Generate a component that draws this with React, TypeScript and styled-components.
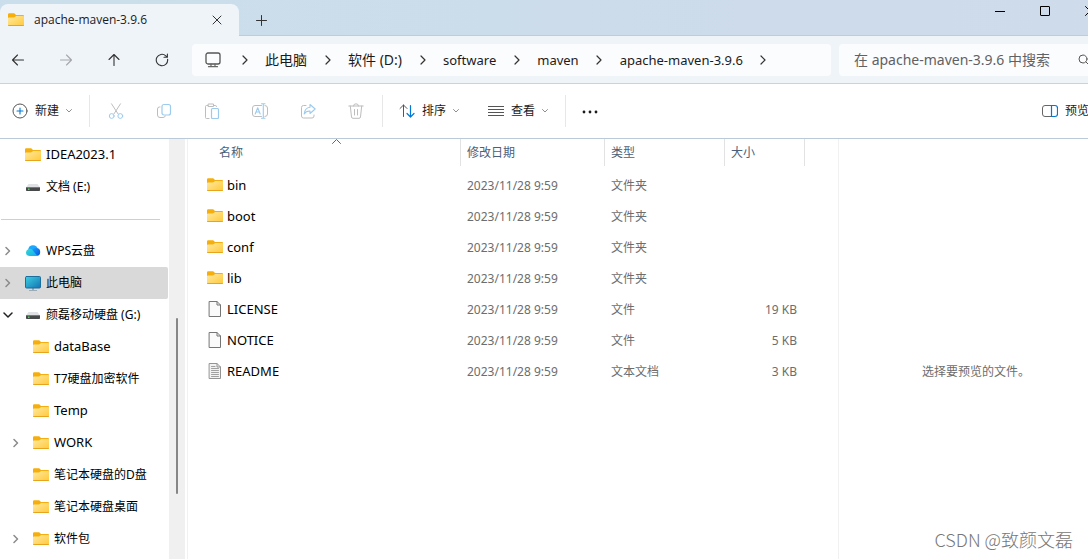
import React from "react";
import styled, { createGlobalStyle, css } from "styled-components";

const GlobalStyle = createGlobalStyle`
  * { box-sizing: border-box; }
  html, body { margin: 0; overflow: hidden; }
  body {
    font-family: "Noto Sans", "Noto Sans CJK SC", sans-serif;
    font-size: 12px;
    line-height: 16px;
    color: #000;
    background: #fff;
  }
  button, input { font: inherit; color: inherit; }
`;

/* The window reaches a little past the right edge of the screen. */
const Window = styled.main`
  display: flex;
  flex-direction: column;
  width: calc(100% + 25px);
  height: 100vh;
  overflow: hidden;
`;

const plainButton = css`
  display: flex;
  align-items: center;
  justify-content: center;
  margin: 0;
  padding: 0;
  border: 0;
  background: none;
`;

const TitleBar = styled.header`
  display: flex;
  align-items: flex-start;
  height: 36px;
  flex: none;
  background: linear-gradient(90deg, #cadfeb, #ccdcea 50%, #cfdbea);
  border-bottom: 1px solid #bccede;
`;

const Tab = styled.div`
  display: flex;
  align-items: center;
  width: 239px;
  height: 32px;
  margin-top: 4px;
  padding: 0 14px 0 8px;
  gap: 10px;
  border-radius: 8px 8px 0 0;
  background: #eff4f9;
`;

const TabTitle = styled.span`
  flex: 1;
  font-family: "Open Sans", "Noto Sans", sans-serif;
  font-weight: 500;
  color: #1b1b1b;
`;

const TabButton = styled.button`
  ${plainButton}
  width: 16px;
  height: 16px;
`;

const NewTabButton = styled.button`
  ${plainButton}
  width: 28px;
  height: 32px;
  margin: 4px 0 0 8px;
`;

const WindowControls = styled.div`
  display: flex;
  margin-left: auto;
`;

const ControlButton = styled.button`
  ${plainButton}
  width: 45px;
  height: 22px;
`;

const NavBar = styled.div`
  display: flex;
  align-items: center;
  flex: none;
  height: 48px;
  padding: 0 13px 0 2px;
  background: #eff4f9;
  border-bottom: 1px solid #c9d3de;
`;

const NavButtons = styled.div`
  display: flex;
  gap: 16px;
  margin-right: 14px;
`;

const NavButton = styled.button`
  ${plainButton}
  width: 32px;
  height: 32px;
`;

const AddressBar = styled.nav`
  display: flex;
  align-items: center;
  flex: 1;
  height: 32px;
  padding-left: 13px;
  border-radius: 4px;
  background: #fbfcfe;
  white-space: nowrap;
`;

const DeviceIcon = styled.span`
  display: flex;
  margin-right: 3px;
`;

const Crumb = styled.button<{ $latin?: boolean }>`
  ${plainButton}
  font-size: ${(p) => (p.$latin ? 13 : 14)}px;
  line-height: 20px;
  color: #1b1b1b;
`;

const CrumbArrow = styled.span`
  display: flex;
  justify-content: center;
  width: 41px;
`;

const SearchBox = styled.label`
  display: flex;
  align-items: center;
  width: 261px;
  height: 32px;
  margin-left: 8px;
  padding: 0 10px 0 15px;
  border-radius: 4px;
  background: #fbfcfe;
`;

const SearchInput = styled.input`
  flex: 1;
  min-width: 0;
  padding: 0;
  border: 0;
  outline: 0;
  background: none;
  font-size: 14px;
  line-height: 20px;
  &::placeholder { color: #5f6164; opacity: 1; }
`;

const Toolbar = styled.div`
  display: flex;
  align-items: center;
  flex: none;
  height: 55px;
  padding: 0 12px;
  background: #fff;
  border-bottom: 1px solid #b9cbdb;
`;

const ToolButton = styled.button<{ $wide?: boolean }>`
  ${plainButton}
  gap: 7px;
  height: 32px;
  width: ${(p) => (p.$wide ? "auto" : "48px")};
  color: #1b1b1b;
  white-space: nowrap;
`;

const ButtonGroup = styled.div<{ $gap?: number }>`
  display: flex;
  gap: ${(p) => p.$gap ?? 0}px;
`;

const ToolDivider = styled.span<{ $before?: number; $after?: number }>`
  width: 1px;
  height: 32px;
  margin: 0 ${(p) => p.$after ?? 0}px 0 ${(p) => p.$before ?? 0}px;
  background: #e7e7e7;
`;

const DetailsToggle = styled.div`
  margin-left: auto;
  margin-right: 12px;
`;

const Body = styled.div`
  display: flex;
  flex: 1;
  min-height: 0;
`;

const Sidebar = styled.aside`
  display: flex;
  flex: none;
  width: 188px;
  border-right: 1px solid #f1f1f1;
`;

const Tree = styled.ul`
  flex: 1;
  margin: 0;
  padding: 0;
  list-style: none;
`;

const TreeRow = styled.li<{ $selected?: boolean }>`
  height: 32px;
  margin-right: 1px;
  border-radius: 0 2px 2px 0;
  background: ${(p) => (p.$selected ? "#d9d9d9" : "transparent")};
`;

const TreeItem = styled.button<{ $child?: boolean }>`
  ${plainButton}
  justify-content: flex-start;
  width: 100%;
  height: 32px;
  padding-left: ${(p) => (p.$child ? 8 : 0)}px;
  white-space: nowrap;
`;

const TreeArrow = styled.span`
  display: flex;
  justify-content: center;
  width: 15px;
  margin-right: 10px;
`;

const TreeLabel = styled.span<{ $latin?: boolean }>`
  margin-left: 5px;
  padding-bottom: ${(p) => (p.$latin ? 2 : 0)}px;
  font-size: ${(p) => (p.$latin ? 13 : 12)}px;
`;

const TreeSeparator = styled.li`
  display: flex;
  align-items: center;
  height: 32px;
  padding: 0 9px 0 1px;
  &::before {
    content: "";
    flex: 1;
    height: 1px;
    background: #cfcfcf;
  }
`;

const ScrollTrack = styled.div`
  width: 16px;
  margin-right: 2px;
  padding: 179px 7px 0;
  background: #f0f0f0;
`;

const ScrollThumb = styled.div`
  height: 176px;
  border-radius: 1px;
  background: #868686;
`;

const ListPane = styled.section`
  flex: 1;
  min-width: 0;
`;

const FileTable = styled.table`
  width: 617px;
  table-layout: fixed;
  border-collapse: separate;
  border-spacing: 0;
  white-space: nowrap;
`;

const HeadCell = styled.th<{ $width: number; $first?: boolean }>`
  position: relative;
  width: ${(p) => p.$width}px;
  height: 27px;
  padding: 0 0 0 ${(p) => (p.$first ? 31 : 6)}px;
  border-right: 1px solid #e2e2e2;
  text-align: left;
  font-weight: 400;
  color: #4c607a;
`;

const SortMark = styled.span`
  position: absolute;
  top: 0;
  left: 144px;
  display: flex;
`;

const Spacer = styled.tr`
  height: 4px;
`;

const Cell = styled.td<{ $right?: boolean }>`
  height: 31px;
  padding: 0 ${(p) => (p.$right ? 8 : 0)}px 0 6px;
  text-align: ${(p) => (p.$right ? "right" : "left")};
  color: #6d6d6d;
`;

const NameCell = styled.td`
  height: 31px;
  padding: 0 0 2px 19px;
`;

const FileName = styled.span`
  display: flex;
  align-items: center;
  gap: 4px;
  font-size: 13px;
`;

const PreviewPane = styled.aside`
  display: flex;
  flex-direction: column;
  justify-content: space-between;
  align-items: center;
  flex: none;
  width: 275px;
  padding: 225px 0 8px;
  border-left: 1px solid #f1f1f1;
  color: #6d6d6d;
`;

const PreviewHint = styled.p`
  margin: 0;
`;

const Watermark = styled.p`
  margin: 0 40px 0 0;
  align-self: flex-end;
  font-family: "Noto Sans CJK SC", sans-serif;
  font-weight: 300;
  font-size: 18px;
  line-height: 24px;
  color: #777;
`;

const Icon = styled.svg`
  flex: none;
  fill: none;
  stroke-linecap: round;
  stroke-linejoin: round;
`;

const Svg = ({ w = 16, h = 16, children }: { w?: number; h?: number; children: React.ReactNode }) => (
  <Icon width={w} height={h} viewBox={`0 0 ${w} ${h}`} aria-hidden="true">
    {children}
  </Icon>
);

const GRAY = "#bdbdbd";
const PALE = "#9ccbee";
const BLUE = "#0078d4";
const DARK = "#333";

const FolderIcon = () => (
  <Svg>
    <defs>
      <linearGradient id="folderFront" x1="0" y1="0" x2="1" y2="1">
        <stop offset="0" stopColor="#ffe9a0" />
        <stop offset="1" stopColor="#ffc93a" />
      </linearGradient>
    </defs>
    <path d="M0 2.5Q0 1.3 1.2 1.3H6.2L8 3H15Q16 3 16 4V7H0Z" fill="#f5ae0c" />
    <path d="M0 6.2Q0 5.5 .8 5.5H6L8.2 4H15.2Q16 4 16 4.8V13Q16 14 15 14H1Q0 14 0 13Z" fill="url(#folderFront)" />
    <path d="M.6 13.5H15.4" stroke="#e8a41c" />
  </Svg>
);

const DriveIcon = () => (
  <Svg>
    <path d="M3.5 5H12.5L15 8.5H1Z" fill="#dfe1e4" />
    <rect x="1" y="8" width="14" height="4" rx=".8" fill="#46484a" />
    <rect x="1" y="8" width="14" height="1" fill="#77797b" />
    <rect x="3" y="9.5" width="1.5" height="1.5" fill="#3fe04f" />
  </Svg>
);

const CloudIcon = () => (
  <Svg>
    <defs>
      <linearGradient id="cloudLeft" x1="0" y1="0" x2="1" y2="1">
        <stop offset="0" stopColor="#36d8d0" />
        <stop offset="1" stopColor="#12a8f5" />
      </linearGradient>
      <linearGradient id="cloudRight" x1="0" y1="0" x2="1" y2="1">
        <stop offset="0" stopColor="#1aa0ff" />
        <stop offset="1" stopColor="#0a52dc" />
      </linearGradient>
    </defs>
    <circle cx="8" cy="7" r="4.8" fill="#1ba7fb" />
    <circle cx="11.2" cy="9" r="4" fill="url(#cloudRight)" />
    <path d="M1 9.2A3.7 3.7 0 0 1 7.6 7.2L12.6 13H4.7A3.8 3.8 0 0 1 1 9.2Z" fill="url(#cloudLeft)" />
  </Svg>
);

const MonitorIcon = () => (
  <Svg>
    <defs>
      <linearGradient id="screen" x1="0" y1="0" x2="1" y2="1">
        <stop offset="0" stopColor="#3fd0e0" />
        <stop offset="1" stopColor="#1173b5" />
      </linearGradient>
    </defs>
    <path d="M7 13H9V15H7ZM4 15H12V16H4Z" fill="#9eabb5" />
    <rect x=".5" y="1.5" width="15" height="11.5" rx="1" fill="url(#screen)" stroke="#1a6d9c" />
  </Svg>
);

const FileIcon = ({ lines }: { lines?: boolean }) => (
  <Svg>
    <path d="M2.5 .5H10L13.5 4V15.5H2.5Z" fill={lines ? "#f2f2f2" : "#fafafa"} stroke={lines ? "#949494" : "#757575"} strokeLinejoin="miter" />
    <path d="M10 .5V4H13.5" stroke={lines ? "#949494" : "#757575"} />
    {lines && <path d="M4.5 3.5H8M4.5 5.5H11.5M4.5 7.5H11.5M4.5 9.5H11.5M4.5 11.5H11.5M4.5 13.5H11.5" stroke="#a0a0a0" />}
  </Svg>
);

const RightArrow = () => (
  <Svg w={6} h={10}><path d="M1 1L5 5L1 9" stroke={DARK} strokeWidth="1.2" /></Svg>
);
const TreeChevron = () => (
  <Svg w={6} h={10}><path d="M1 1.5L4.5 5L1 8.5" stroke="#8b8b8b" strokeWidth="1.5" /></Svg>
);
const TreeChevronOpen = () => (
  <Svg w={10} h={6}><path d="M1 1L5 5L9 1" stroke="#222" strokeWidth="1.5" /></Svg>
);
const Caret = () => (
  <Svg w={6} h={4}><path d="M.5 .5L3 3L5.5 .5" stroke="#8f8f8f" /></Svg>
);

const treeTop = [
  { label: "IDEA2023.1", icon: <FolderIcon />, latin: true },
  { label: "文档 (E:)", icon: <DriveIcon /> },
];

const treeBottom: { label: string; icon: React.ReactNode; arrow?: "closed" | "open"; selected?: boolean; child?: boolean; latin?: boolean }[] = [
  { label: "WPS云盘", icon: <CloudIcon />, arrow: "closed" },
  { label: "此电脑", icon: <MonitorIcon />, arrow: "closed", selected: true },
  { label: "颜磊移动硬盘 (G:)", icon: <DriveIcon />, arrow: "open" },
  { label: "dataBase", icon: <FolderIcon />, child: true, latin: true },
  { label: "T7硬盘加密软件", icon: <FolderIcon />, child: true },
  { label: "Temp", icon: <FolderIcon />, child: true, latin: true },
  { label: "WORK", icon: <FolderIcon />, child: true, arrow: "closed", latin: true },
  { label: "笔记本硬盘的D盘", icon: <FolderIcon />, child: true },
  { label: "笔记本硬盘桌面", icon: <FolderIcon />, child: true },
  { label: "软件包", icon: <FolderIcon />, child: true, arrow: "closed" },
];

const files = [
  { name: "bin", type: "文件夹", size: "", icon: <FolderIcon /> },
  { name: "boot", type: "文件夹", size: "", icon: <FolderIcon /> },
  { name: "conf", type: "文件夹", size: "", icon: <FolderIcon /> },
  { name: "lib", type: "文件夹", size: "", icon: <FolderIcon /> },
  { name: "LICENSE", type: "文件", size: "19 KB", icon: <FileIcon /> },
  { name: "NOTICE", type: "文件", size: "5 KB", icon: <FileIcon /> },
  { name: "README", type: "文本文档", size: "3 KB", icon: <FileIcon lines /> },
];

const crumbs = [
  { label: "此电脑" },
  { label: "软件 (D:)" },
  { label: "software", latin: true },
  { label: "maven", latin: true },
  { label: "apache-maven-3.9.6", latin: true },
];

export default function App() {
  return (
    <>
      <GlobalStyle />
      <Window>
        <TitleBar>
          <Tab>
            <FolderIcon />
            <TabTitle>apache-maven-3.9.6</TabTitle>
            <TabButton aria-label="关闭标签页">
              <Svg w={10} h={10}><path d="M1 1L9 9M9 1L1 9" stroke={DARK} /></Svg>
            </TabButton>
          </Tab>
          <NewTabButton aria-label="新建标签页">
            <Svg w={11} h={11}><path d="M5.5 .5V10.5M.5 5.5H10.5" stroke={DARK} /></Svg>
          </NewTabButton>
          <WindowControls>
            <ControlButton aria-label="最小化"><Svg w={11} h={11}><path d="M0 5.5H10" stroke="#000" strokeLinecap="butt" /></Svg></ControlButton>
            <ControlButton aria-label="最大化"><Svg w={11} h={10}><rect x=".5" y=".5" width="9" height="9" rx=".5" stroke="#000" /></Svg></ControlButton>
            <ControlButton aria-label="关闭"><Svg w={11} h={10}><path d="M.5 .5L9.5 9.5M9.5 .5L.5 9.5" stroke="#000" /></Svg></ControlButton>
          </WindowControls>
        </TitleBar>

        <NavBar>
          <NavButtons>
            <NavButton aria-label="后退"><Svg w={14} h={14}><path d="M12.5 7H1.5M6.5 2L1.5 7L6.5 12" stroke={DARK} strokeWidth="1.1" /></Svg></NavButton>
            <NavButton aria-label="前进" disabled><Svg w={14} h={14}><path d="M1.5 7H12.5M7.5 2L12.5 7L7.5 12" stroke="#a5a8ab" strokeWidth="1.1" /></Svg></NavButton>
            <NavButton aria-label="向上"><Svg w={14} h={14}><path d="M7 12.5V1.5M2 6.5L7 1.5L12 6.5" stroke={DARK} strokeWidth="1.1" /></Svg></NavButton>
            <NavButton aria-label="刷新"><Svg w={14} h={14}><path d="M12.6 6.2A5.7 5.7 0 1 1 10.8 2.8L12.3 4.2M12.4 1V4.3H9" stroke={DARK} strokeWidth="1.1" /></Svg></NavButton>
          </NavButtons>
          <AddressBar aria-label="地址栏">
            <DeviceIcon>
              <Svg><rect x="1" y="1" width="14" height="11" rx="2" stroke="#555" strokeWidth="1.3" /><path d="M6 12V14.5M10 12V14.5M3.5 14.7H12.5" stroke="#666" strokeWidth="1.2" /></Svg>
            </DeviceIcon>
            {crumbs.map((c) => (
              <React.Fragment key={c.label}>
                <CrumbArrow><RightArrow /></CrumbArrow>
                <Crumb $latin={c.latin}>{c.label}</Crumb>
              </React.Fragment>
            ))}
            <CrumbArrow><RightArrow /></CrumbArrow>
          </AddressBar>
          <SearchBox>
            <SearchInput aria-label="搜索" placeholder="在 apache-maven-3.9.6 中搜索" />
            <Svg w={12} h={12}><circle cx="5" cy="5" r="4" stroke="#555" /><path d="M8 8L11 11" stroke="#555" /></Svg>
          </SearchBox>
        </NavBar>

        <Toolbar>
          <ToolButton $wide>
            <Svg><circle cx="8" cy="8" r="7" stroke="#555" /><path d="M8 5V11M5 8H11" stroke={BLUE} strokeWidth="1.1" /></Svg>
            新建
            <Caret />
          </ToolButton>
          <ToolDivider $before={17} $after={2} />
          <ButtonGroup>
            <ToolButton disabled aria-label="剪切"><Svg><path d="M3.5 .8L10 10.8M12.5 .8L6 10.8" stroke={GRAY} /><circle cx="3.7" cy="13" r="2.4" stroke={PALE} /><circle cx="12.3" cy="13" r="2.4" stroke={PALE} /></Svg></ToolButton>
            <ToolButton disabled aria-label="复制"><Svg><path d="M4 4H3.5Q1.5 4 1.5 6V12Q1.5 14.5 4 14.5H7Q9 14.5 9.3 13" stroke={GRAY} /><rect x="6" y="1.5" width="8.5" height="10.5" rx="2" stroke={PALE} strokeWidth="1.2" /></Svg></ToolButton>
            <ToolButton disabled aria-label="粘贴"><Svg><path d="M4 2.5H2.5Q1.5 2.5 1.5 3.5V14.5Q1.5 15.5 2.5 15.5H5M10 2.5H11.5Q12.5 2.5 12.5 3.5M4.5 1H9.5V3.5H4.5Z" stroke={GRAY} /><rect x="7.5" y="5.5" width="7" height="10" rx="1" stroke={PALE} strokeWidth="1.2" /></Svg></ToolButton>
            <ToolButton disabled aria-label="重命名"><Svg><path d="M9.5 2.5H3Q.5 2.5 .5 5V11Q.5 13.5 3 13.5H9.5M13 2.5Q15.5 2.5 15.5 5V11Q15.5 13.5 13 13.5" stroke={GRAY} /><path d="M3.2 11L5.7 4.8L8.2 11M4.1 9H7.3M11.3 1V15M9.5 .8H13M9.5 15.2H13" stroke={PALE} strokeWidth="1.1" /></Svg></ToolButton>
            <ToolButton disabled aria-label="共享"><Svg><path d="M6 2.5H3.5Q1.5 2.5 1.5 4.5V13Q1.5 15 3.5 15H12Q14 15 14 13V12" stroke={GRAY} /><path d="M10 1.5L15.2 6L10 10.5V8Q6 7.8 4.2 11Q4.7 4.8 10 4.2Z" stroke={PALE} strokeWidth="1.1" /></Svg></ToolButton>
            <ToolButton disabled aria-label="删除"><Svg><path d="M.8 3H15.2M5.5 3Q5.5 .8 8 .8Q10.5 .8 10.5 3M2.3 3L3.5 14Q3.7 15.3 5 15.3H11Q12.3 15.3 12.5 14L13.7 3M6.5 6.5V12M9.5 6.5V12" stroke={GRAY} /></Svg></ToolButton>
          </ButtonGroup>
          <ToolDivider $before={2} $after={16} />
          <ButtonGroup $gap={29}>
            <ToolButton $wide>
              <Svg><path d="M4.5 13.5V2M1 5.5L4.5 2L8 5.5" stroke="#555" /><path d="M11.5 2.5V14M8 10.5L11.5 14L15 10.5" stroke={BLUE} strokeWidth="1.2" /></Svg>
              排序
              <Caret />
            </ToolButton>
            <ToolButton $wide>
              <Svg><path d="M0 3.5H16M0 6.5H16M0 9.5H16M0 12.5H16" stroke="#555" strokeLinecap="butt" /></Svg>
              查看
              <Caret />
            </ToolButton>
          </ButtonGroup>
          <ToolDivider $before={17} />
          <ToolButton aria-label="查看更多">
            <Svg><circle cx="2" cy="9" r="1.4" fill="#1b1b1b" /><circle cx="8" cy="9" r="1.4" fill="#1b1b1b" /><circle cx="14" cy="9" r="1.4" fill="#1b1b1b" /></Svg>
          </ToolButton>
          <DetailsToggle>
            <ToolButton $wide>
              <Svg><path d="M9.5 2.5H3Q.5 2.5 .5 5V11Q.5 13.5 3 13.5H9.5" stroke="#666" /><path d="M9.5 2.5H13Q15.5 2.5 15.5 5V11Q15.5 13.5 13 13.5H9.5Z" stroke={BLUE} strokeWidth="1.2" /></Svg>
              预览
            </ToolButton>
          </DetailsToggle>
        </Toolbar>

        <Body>
          <Sidebar>
            <Tree>
              {treeTop.map((t) => (
                <TreeRow key={t.label}>
                  <TreeItem><TreeArrow />{t.icon}<TreeLabel $latin={t.latin}>{t.label}</TreeLabel></TreeItem>
                </TreeRow>
              ))}
              <TreeSeparator />
              {treeBottom.map((t) => (
                <TreeRow key={t.label} $selected={t.selected}>
                  <TreeItem $child={t.child}>
                    <TreeArrow>{t.arrow === "closed" ? <TreeChevron /> : t.arrow === "open" ? <TreeChevronOpen /> : null}</TreeArrow>
                    {t.icon}
                    <TreeLabel $latin={t.latin}>{t.label}</TreeLabel>
                  </TreeItem>
                </TreeRow>
              ))}
            </Tree>
            <ScrollTrack><ScrollThumb /></ScrollTrack>
          </Sidebar>

          <ListPane>
            <FileTable>
              <thead>
                <tr>
                  <HeadCell $width={273} $first>
                    名称
                    <SortMark><Svg w={9} h={5}><path d="M.5 4.5L4.5 .5L8.5 4.5" stroke="#666" /></Svg></SortMark>
                  </HeadCell>
                  <HeadCell $width={144}>修改日期</HeadCell>
                  <HeadCell $width={120}>类型</HeadCell>
                  <HeadCell $width={80}>大小</HeadCell>
                </tr>
              </thead>
              <tbody>
                <Spacer />
                {files.map((f) => (
                  <tr key={f.name}>
                    <NameCell><FileName>{f.icon}{f.name}</FileName></NameCell>
                    <Cell>2023/11/28 9:59</Cell>
                    <Cell>{f.type}</Cell>
                    <Cell $right>{f.size}</Cell>
                  </tr>
                ))}
              </tbody>
            </FileTable>
          </ListPane>

          <PreviewPane>
            <PreviewHint>选择要预览的文件。</PreviewHint>
            <Watermark>CSDN @致颜文磊</Watermark>
          </PreviewPane>
        </Body>
      </Window>
    </>
  );
}
